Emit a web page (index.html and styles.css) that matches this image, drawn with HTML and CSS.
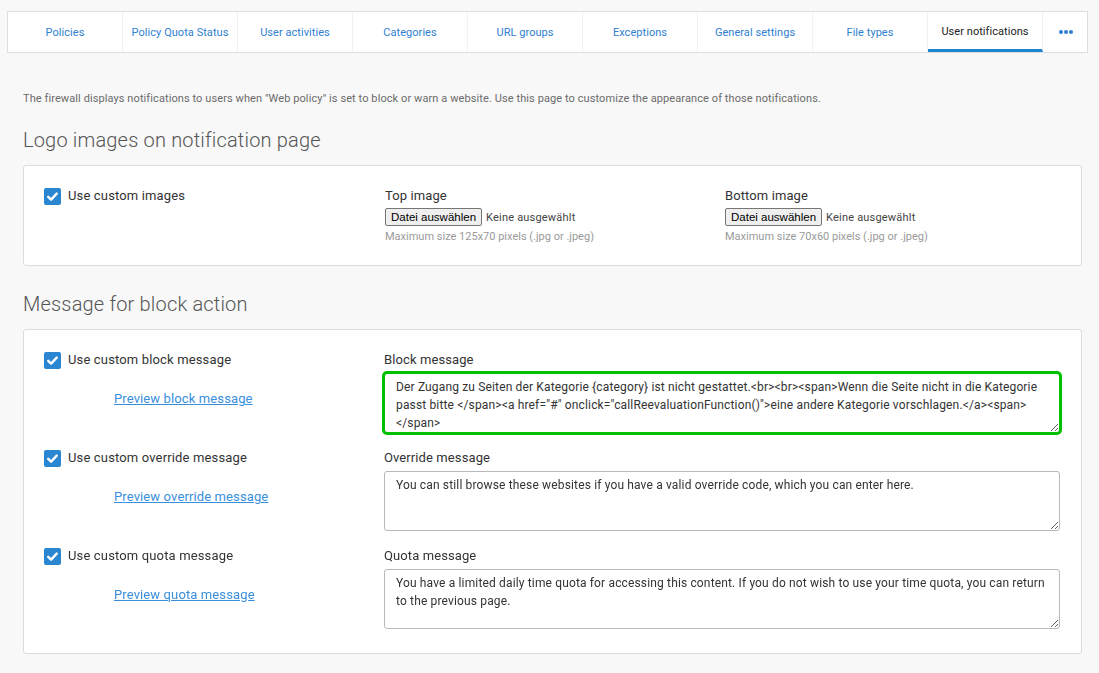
FILE: index.html
```html
<!DOCTYPE html>
<html>
<head>
<meta charset="utf-8">
<title>User notifications</title>
<link rel="stylesheet" href="styles.css">
</head>
<body>
<nav class="tabs">
  <a class="tab">Policies</a>
  <a class="tab">Policy Quota Status</a>
  <a class="tab">User activities</a>
  <a class="tab">Categories</a>
  <a class="tab">URL groups</a>
  <a class="tab">Exceptions</a>
  <a class="tab">General settings</a>
  <a class="tab">File types</a>
  <a class="tab active">User notifications</a>
  <a class="tab more"><span class="dot"></span><span class="dot"></span><span class="dot"></span></a>
</nav>

<main class="page">
  <p class="desc">The firewall displays notifications to users when "Web policy" is set to block or warn a website. Use this page to customize the appearance of those notifications.</p>

  <h2 class="section-title">Logo images on notification page</h2>
  <section class="card card-images">
    <label class="check"><span class="box"><svg viewBox="0 0 17 17"><path d="M4.2 8.8l2.9 2.8 5.6-6" fill="none" stroke="#fff" stroke-width="2.4" stroke-linecap="round" stroke-linejoin="round"/></svg></span>Use custom images</label>
    <div class="field">
      <div class="field-label">Top image</div>
      <div class="file"><button class="filebtn">Datei auswählen</button><span class="nofile">Keine ausgewählt</span></div>
      <div class="hint">Maximum size 125x70 pixels (.jpg or .jpeg)</div>
    </div>
    <div class="field">
      <div class="field-label">Bottom image</div>
      <div class="file"><button class="filebtn">Datei auswählen</button><span class="nofile">Keine ausgewählt</span></div>
      <div class="hint">Maximum size 70x60 pixels (.jpg or .jpeg)</div>
    </div>
  </section>

  <h2 class="section-title">Message for block action</h2>
  <section class="card card-messages">
    <div class="msg-row">
      <div class="msg-left">
        <label class="check"><span class="box"><svg viewBox="0 0 17 17"><path d="M4.2 8.8l2.9 2.8 5.6-6" fill="none" stroke="#fff" stroke-width="2.4" stroke-linecap="round" stroke-linejoin="round"/></svg></span>Use custom block message</label>
        <a class="preview" href="#">Preview block message</a>
      </div>
      <div class="msg-right">
        <div class="field-label">Block message</div>
        <textarea class="ta highlight">Der Zugang zu Seiten der Kategorie {category} ist nicht gestattet.&lt;br&gt;&lt;br&gt;&lt;span&gt;Wenn die Seite nicht in die Kategorie passt bitte &lt;/span&gt;&lt;a href="#" onclick="callReevaluationFunction()"&gt;eine andere Kategorie vorschlagen.&lt;/a&gt;&lt;span&gt;&lt;/span&gt;</textarea>
      </div>
    </div>
    <div class="msg-row">
      <div class="msg-left">
        <label class="check"><span class="box"><svg viewBox="0 0 17 17"><path d="M4.2 8.8l2.9 2.8 5.6-6" fill="none" stroke="#fff" stroke-width="2.4" stroke-linecap="round" stroke-linejoin="round"/></svg></span>Use custom override message</label>
        <a class="preview" href="#">Preview override message</a>
      </div>
      <div class="msg-right">
        <div class="field-label">Override message</div>
        <textarea class="ta">You can still browse these websites if you have a valid override code, which you can enter here.</textarea>
      </div>
    </div>
    <div class="msg-row">
      <div class="msg-left">
        <label class="check"><span class="box"><svg viewBox="0 0 17 17"><path d="M4.2 8.8l2.9 2.8 5.6-6" fill="none" stroke="#fff" stroke-width="2.4" stroke-linecap="round" stroke-linejoin="round"/></svg></span>Use custom quota message</label>
        <a class="preview" href="#">Preview quota message</a>
      </div>
      <div class="msg-right">
        <div class="field-label">Quota message</div>
        <textarea class="ta">You have a limited daily time quota for accessing this content. If you do not wish to use your time quota, you can return to the previous page.</textarea>
      </div>
    </div>
  </section>
</main>
</body>
</html>
```

FILE: styles.css
```css
* { box-sizing: border-box; }

body {
  margin: 0;
  background: #f8f8f8;
  font-family: Roboto, "Liberation Sans", sans-serif;
  color: #333;
}

.tabs {
  display: flex;
  margin: 11px 11px 0 7px;
  height: 42px;
  background: #fff;
  border: 1px solid #dedede;
}

.tab {
  flex: none;
  width: 115px;
  display: flex;
  align-items: center;
  justify-content: center;
  font-size: 11px;
  letter-spacing: 0.05px;
  color: #2f80d2;
  border-right: 1px solid #f1f1f1;
  cursor: pointer;
}

.tab.active {
  color: #222;
  border-bottom: 3px solid #1e86d2;
  padding-top: 1px;
}

.tab.more {
  flex: 1;
  width: auto;
  border-right: none;
  gap: 1px;
  padding-left: 2px;
}

.dot {
  width: 4px;
  height: 4px;
  border-radius: 50%;
  background: #2f80d2;
}

.page {
  padding: 0 17px 18px 23px;
}

.desc {
  margin: 39px 0 0;
  font-size: 11px;
  line-height: 14px;
  letter-spacing: 0.09px;
  color: #6b6b6b;
}

.section-title {
  margin: 21px 0 12px;
  font-size: 20px;
  line-height: 26px;
  font-weight: 300;
  letter-spacing: 0.18px;
  color: #555;
}

.card {
  background: #fff;
  border: 1px solid #dcdcdc;
  border-radius: 3px;
}

.card-images {
  display: grid;
  grid-template-columns: 341px 340px 1fr;
  align-items: start;
  padding: 21px 20px 19px;
  height: 101px;
  margin-bottom: 25px;
}

.check {
  display: flex;
  align-items: center;
  gap: 7px;
  font-size: 13px;
  line-height: 18px;
  letter-spacing: 0.15px;
  color: #333;
}

.box {
  width: 17px;
  height: 17px;
  border-radius: 2px;
  background: #2a86d1;
  display: flex;
}

.box svg { width: 17px; height: 17px; }

.field-label {
  font-size: 13px;
  line-height: 18px;
  letter-spacing: 0.1px;
  color: #333;
}

.file {
  display: flex;
  align-items: center;
  margin-top: 3px;
}

.filebtn {
  font-family: "Liberation Sans", Arial, sans-serif;
  font-size: 11.5px;
  height: 18px;
  padding: 0 5px;
  background: #efefef;
  border: 1px solid #767676;
  border-radius: 2px;
  color: #000;
}

.nofile {
  margin-left: 4px;
  font-size: 11px;
  letter-spacing: 0.2px;
  color: #444;
}

.hint {
  margin-top: 4px;
  font-size: 11px;
  color: #9a9a9a;
}

.card-messages {
  padding: 21px 21px 24px 20px;
}

.msg-row {
  display: grid;
  grid-template-columns: 340px 1fr;
}

.msg-row + .msg-row { margin-top: 16px; }

.msg-left {
  display: flex;
  flex-direction: column;
  align-items: flex-start;
}

.preview {
  margin: 21px 0 0 70px;
  font-size: 13px;
  line-height: 18px;
  letter-spacing: 0.12px;
  color: #3a8fdc;
  text-decoration: underline;
}

.msg-right .field-label { margin-bottom: 4px; }

.ta {
  display: block;
  width: 676px;
  height: 60px;
  resize: vertical;
  padding: 4px 11px;
  font-family: Roboto, "Liberation Sans", sans-serif;
  font-size: 12px;
  line-height: 18px;
  letter-spacing: 0.15px;
  color: #333;
  border: 1px solid #b8b8b8;
  border-radius: 3px;
  background: #fff;
}

.ta.highlight {
  outline: 3px solid #00c000;
  outline-offset: -1px;
}
```
